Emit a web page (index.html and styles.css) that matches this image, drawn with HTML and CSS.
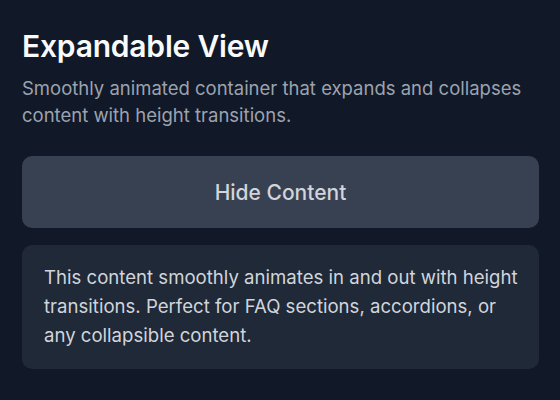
FILE: index.html
```html
<!DOCTYPE html>
<html>
<head>
<meta charset="utf-8">
<link rel="stylesheet" href="styles.css">
</head>
<body>
<main class="page">
  <h1 class="title">Expandable View</h1>
  <p class="subtitle">Smoothly animated container that expands and collapses content with height transitions.</p>
  <button class="toggle">Hide Content</button>
  <div class="panel">
    <p class="panel-text">This content smoothly animates in and out with height transitions. Perfect for FAQ sections, accordions, or any collapsible content.</p>
  </div>
</main>
</body>
</html>
```
FILE: styles.css
```css
html, body {
  margin: 0;
  padding: 0;
  background: #111827;
  height: 100%;
}
body {
  font-family: Inter, "Noto Sans", sans-serif;
  -webkit-font-smoothing: antialiased;
}
.page {
  padding: 27px 21px 0 22px;
  display: flex;
  flex-direction: column;
}
.title {
  margin: 0;
  font-size: 30px;
  font-weight: 600;
  color: #f9fafb;
  line-height: 38px;
  letter-spacing: -0.2px;
}
.subtitle {
  margin: 10px 0 0;
  font-size: 18.5px;
  line-height: 27px;
  color: #9ca3af;
}
.toggle {
  margin-top: 27px;
  height: 72px;
  border: none;
  border-radius: 10px;
  background: #374151;
  color: #d1d5db;
  font-family: inherit;
  font-size: 21px;
  font-weight: 500;
}
.panel {
  margin-top: 17px;
  background: #1f2937;
  border-radius: 10px;
  padding: 18px 14px 19px 22px;
}
.panel-text {
  margin: 0;
  font-size: 18.6px;
  line-height: 29px;
  color: #d1d5db;
}
```
